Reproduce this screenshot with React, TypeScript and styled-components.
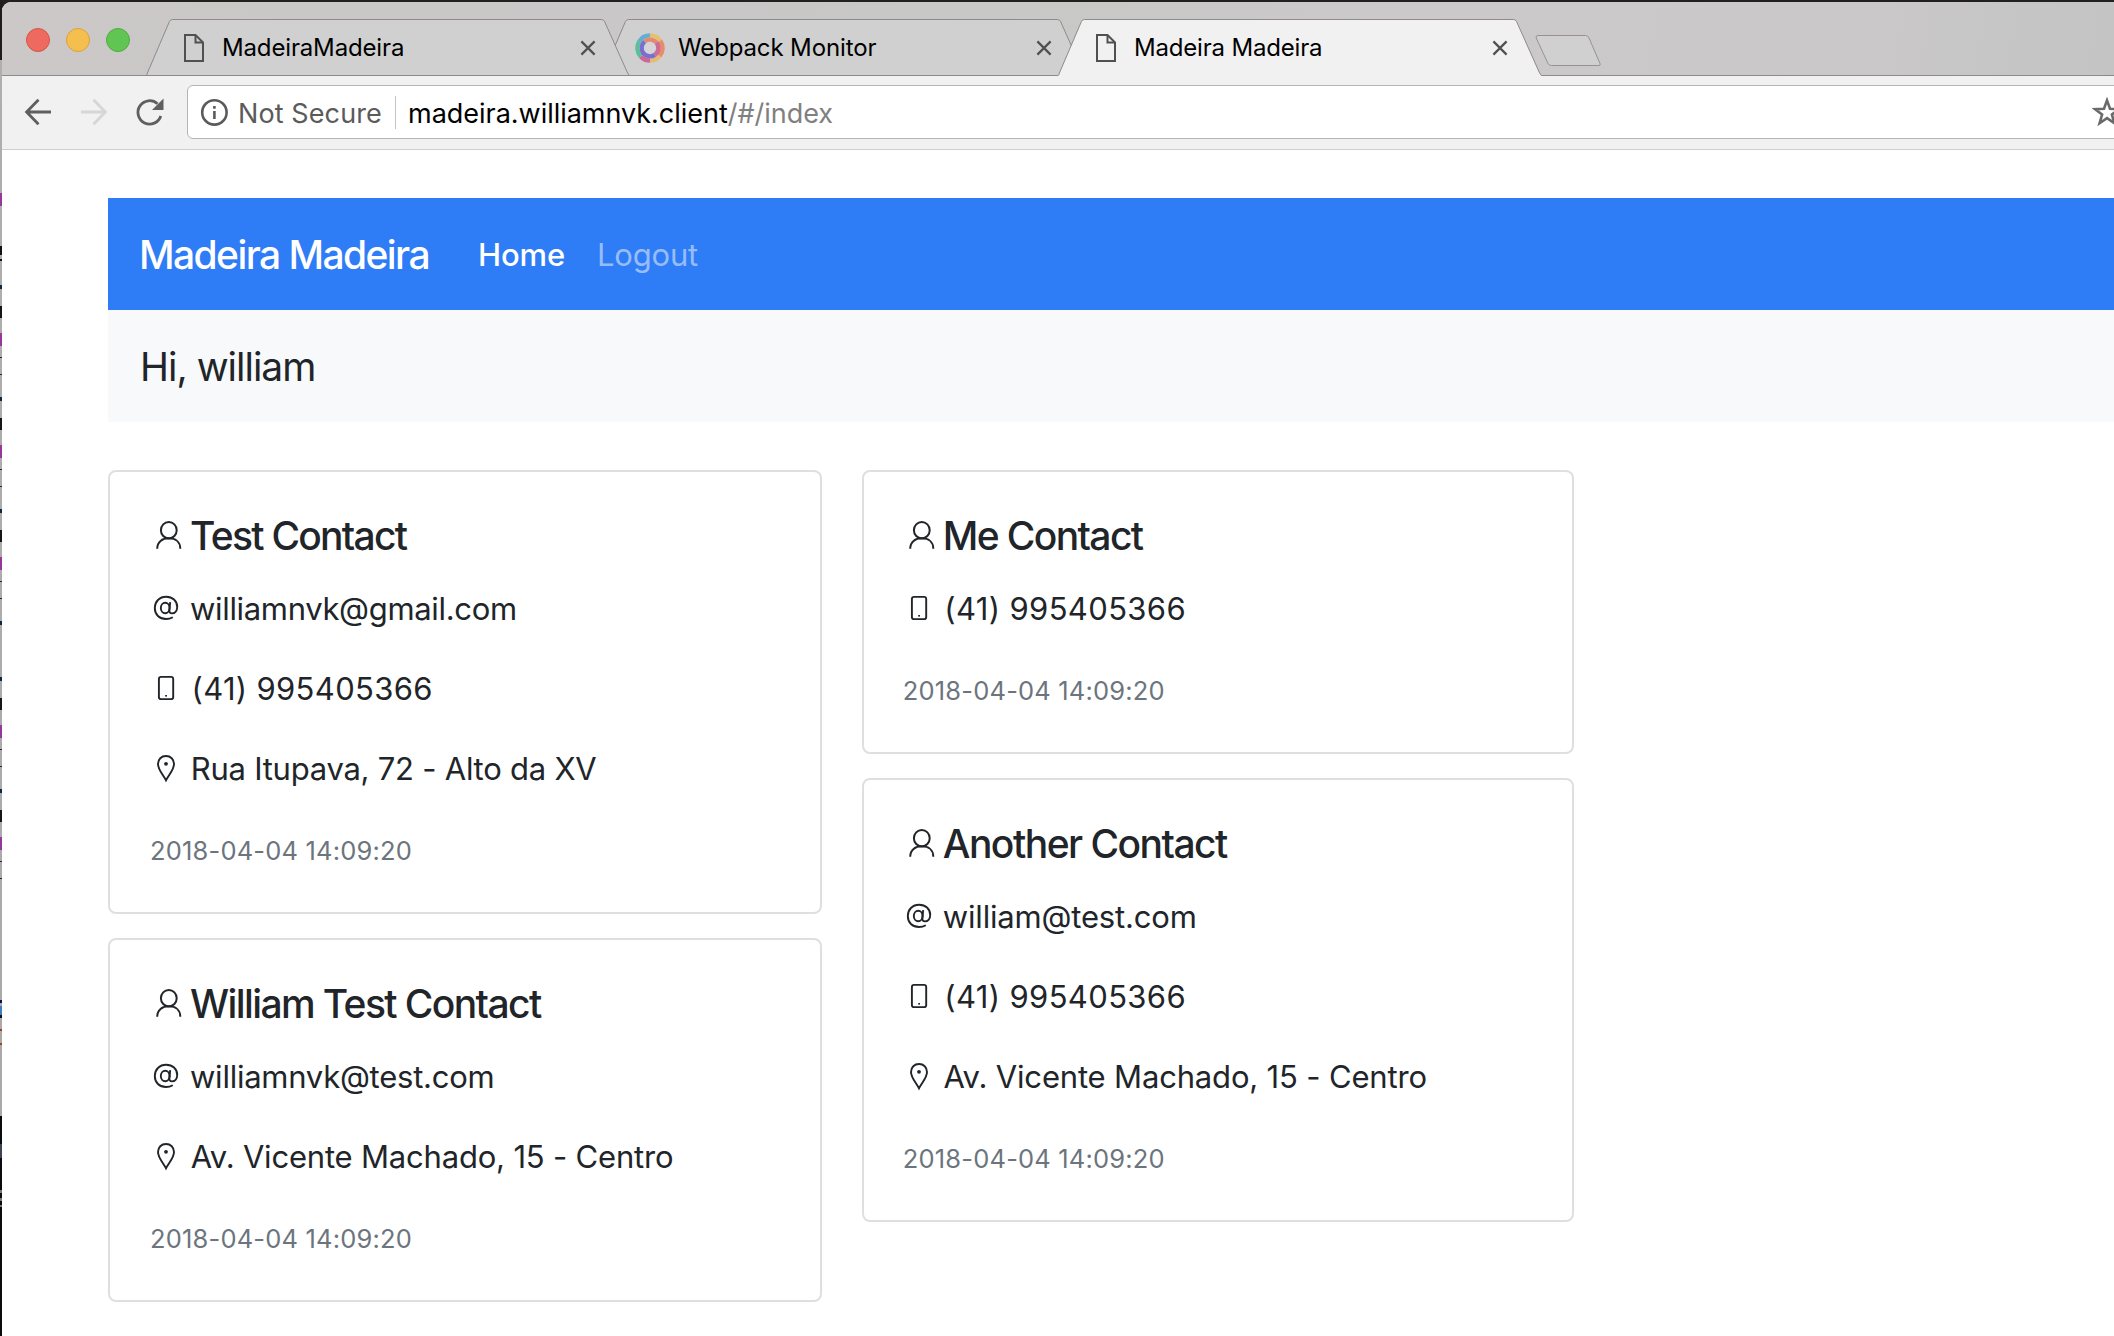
import React from 'react';
import styled, { createGlobalStyle } from 'styled-components';

const GlobalStyle = createGlobalStyle`
  *, *::before, *::after { box-sizing: border-box; }
  html, body { margin: 0; padding: 0; background: #fff; overflow: hidden; }
  body { font-family: Inter, "Liberation Sans", sans-serif; color: #212529; }
  svg { display: block; flex: none; }
  h5, p { margin: 0; }
`;

const Screen = styled.div`
  width: 2114px;
  height: 1336px;
  display: flex;
  flex-direction: column;
  background: #fff;
  overflow: hidden;
`;

const DesktopTop = styled.div`
  height: 2px;
  flex: none;
  background: #231f20;
`;

const Row = styled.div`
  display: flex;
  flex: 1;
  min-height: 0;
  background: linear-gradient(#231f20 20px, #fff 20px);
`;

const DesktopEdge = styled.div`
  position: relative;
  width: 2px;
  flex: none;
  background: linear-gradient(#1d1b1c 58px, #b0afb0 58px, #a9a9a9 1114px, #0b0b0d 1114px);
`;

const Mark = styled.i<{ $y: number; $h: number; $c: string }>`
  position: absolute;
  left: 0;
  width: 2px;
  top: ${(p) => p.$y - 2}px;
  height: ${(p) => p.$h}px;
  background: ${(p) => p.$c};
`;

const Browser = styled.div`
  flex: 1;
  min-width: 0;
  display: flex;
  flex-direction: column;
  background: #fff;
  border-top-left-radius: 9px;
  overflow: hidden;
`;

const TabStrip = styled.div`
  height: 74px;
  flex: none;
  display: flex;
  padding-left: 24px;
  border-bottom: 1px solid #8d898c;
  background: linear-gradient(100deg, #cbc8c7 0%, #c9c7c7 30%, #c8c8c7 45%, #cbc9c9 65%, #cac8c8 88%, #c4c4c4 100%);
`;

const Lights = styled.div`
  display: flex;
  gap: 16px;
  width: 120px;
  padding-top: 26px;
`;

const Light = styled.span<{ $fill: string; $edge: string }>`
  width: 24px;
  height: 24px;
  border-radius: 50%;
  background: ${(p) => p.$fill};
  border: 1px solid ${(p) => p.$edge};
`;

const Tab = styled.div<{ $z: number }>`
  position: relative;
  z-index: ${(p) => p.$z};
  width: 484px;
  height: 57px;
  margin: 17px -28px 0 0;
  flex: none;
  display: flex;
  align-items: center;
  padding: 0 34px 0 37px;
`;

const TabShape = styled.svg`
  position: absolute;
  left: 0;
  top: 0;
`;

const TabIcon = styled.span<{ $wide?: boolean }>`
  position: relative;
  width: ${(p) => (p.$wide ? 44 : 39)}px;
  margin-left: ${(p) => (p.$wide ? -5 : 0)}px;
  display: flex;
`;

const TabTitle = styled.span<{ $ls: number }>`
  position: relative;
  flex: 1;
  font-size: 24px;
  line-height: 30px;
  letter-spacing: ${(p) => p.$ls}px;
  color: #000;
  white-space: nowrap;
`;

const TabClose = styled.svg`
  position: relative;
`;

const NewTab = styled.svg`
  margin: 32px 0 0 21px;
`;

const Toolbar = styled.div`
  height: 74px;
  flex: none;
  display: flex;
  align-items: flex-start;
  padding: 9px 0 0 22px;
  background: #f1f1f1;
  border-bottom: 1px solid #cfcfcf;
`;

const NavIcon = styled.svg<{ $gap?: number }>`
  margin: 11px ${(p) => p.$gap ?? 24}px 0 0;
`;

const Address = styled.div`
  height: 54px;
  flex: 1;
  display: flex;
  align-items: center;
  padding-left: 12px;
  margin-right: -20px;
  border: 1px solid #b4b4b4;
  border-radius: 6px;
  background: #fff;
  font-size: 27px;
  line-height: 34px;
  white-space: nowrap;
`;

const Secure = styled.span`
  margin-left: 10px;
  padding-top: 3px;
  width: 157px;
  color: #5b5b5b;
  letter-spacing: 0.1px;
`;

const Divider = styled.span`
  width: 1px;
  height: 33px;
  background: #c4c4c4;
  margin-right: 12px;
`;

const Url = styled.span`
  flex: 1;
  padding-top: 3px;
  color: #000;
  letter-spacing: -0.02px;
`;

const UrlPath = styled.span`
  color: #808080;
`;

const Star = styled.svg`
  margin-right: 11px;
`;

const Page = styled.main`
  flex: 1;
  padding: 48px 0 0 106px;
`;

const Navbar = styled.nav`
  height: 112px;
  display: flex;
  align-items: center;
  padding-left: 31px;
  background: #2e7cf6;
  color: #fff;
`;

const Brand = styled.span`
  width: 339px;
  font-size: 39px;
  font-weight: 450;
  letter-spacing: -1.58px;
`;

const NavLink = styled.span<{ $active?: boolean; $w: number; $ls: number }>`
  width: ${(p) => p.$w}px;
  font-size: 31px;
  font-weight: ${(p) => (p.$active ? 450 : 400)};
  letter-spacing: ${(p) => p.$ls}px;
  color: ${(p) => (p.$active ? '#fff' : '#96bdfa')};
`;

const Greeting = styled.div`
  height: 112px;
  display: flex;
  align-items: center;
  padding-left: 32px;
  background: #f8f9fb;
  font-size: 39px;
  letter-spacing: -1px;
`;

const Columns = styled.div`
  display: flex;
  align-items: flex-start;
  gap: 39.5px;
  margin-top: 48px;
`;

const Column = styled.div<{ $w: number }>`
  width: ${(p) => p.$w}px;
  display: flex;
  flex-direction: column;
  gap: 24px;
`;

const Card = styled.article<{ $inset: number }>`
  border: 2px solid #dfdfdf;
  border-radius: 8px;
  padding: 40px ${(p) => p.$inset}px;
  display: flex;
  flex-direction: column;
`;

const CardTitle = styled.h5<{ $ls: number }>`
  display: flex;
  align-items: center;
  height: 48px;
  margin-bottom: 24px;
  font-size: 39px;
  font-weight: 550;
  line-height: 48px;
  letter-spacing: ${(p) => p.$ls}px;
  white-space: nowrap;
`;

const CardLine = styled.p`
  display: flex;
  align-items: center;
  height: 48px;
  margin-bottom: 32px;
  font-size: 31px;
  line-height: 48px;
  white-space: nowrap;
`;

const LineText = styled.span<{ $ls: number; $indent: number }>`
  padding: 2px 0 0 ${(p) => p.$indent}px;
  letter-spacing: ${(p) => p.$ls}px;
`;

const CardDate = styled.p`
  height: 48px;
  padding-top: 1px;
  font-size: 31px;
  line-height: 48px;
`;

const Small = styled.small`
  font-size: 25.5px;
  color: #6c757d;
  letter-spacing: 0.18px;
`;

const Glyph = styled.span`
  width: 40px;
  flex: none;
`;

const ink = { fill: 'none', stroke: '#212529' };

const UserIcon = () => (
  <svg width="40" height="40" viewBox="0 0 40 40" {...ink} strokeWidth="2">
    <ellipse cx="18.8" cy="14.2" rx="7.9" ry="8.2" />
    <path d="M7.2 32.700C7.200 25.800 12.300 22.300 18.800 22.300S30.300 25.800 30.300 32.700" />
  </svg>
);

const AtIcon = () => (
  <svg width="40" height="40" viewBox="0 0 40 40" {...ink} strokeWidth="1.9">
    <ellipse cx="15.200" cy="20" rx="4.400" ry="5.200" />
    <path d="M20.200 14.200L19.400 22.200C19.200 24.400 20.200 25.400 22 25.400C25 25.400 27.200 22.600 27.200 19C27.200 12.800 22.400 8.800 16.200 8.800C9.400 8.800 4.800 13.600 4.800 20C4.800 26.600 9.400 31 16 31C18.600 31 20.800 30.400 22.800 29.200" />
  </svg>
);

const PhoneIcon = () => (
  <svg width="40" height="40" viewBox="0 0 40 40" {...ink} strokeWidth="1.900">
    <rect x="8.900" y="8.900" width="14.300" height="22.200" rx="2.200" />
    <rect x="15.200" y="27" width="1.800" height="1.600" fill="#212529" stroke="none" />
  </svg>
);

const PinIcon = () => (
  <svg width="40" height="40" viewBox="0 0 40 40" {...ink} strokeWidth="1.900">
    <path d="M16 32.400C13.400 27.200 8 21.800 8 16C8 11.200 11.400 8 16 8S24 11.200 24 16C24 21.800 18.600 27.200 16 32.400Z" />
    <circle cx="16" cy="15.800" r="1.900" fill="#212529" stroke="none" />
  </svg>
);

const icons = { at: AtIcon, phone: PhoneIcon, pin: PinIcon };

type Line = { icon: keyof typeof icons; text: string; ls: number };
type Contact = { name: string; ls: number; lines: Line[] };

const left: Contact[] = [
  {
    name: 'Test Contact',
    ls: -1.72,
    lines: [
      { icon: 'at', text: 'williamnvk@gmail.com', ls: -0.33 },
      { icon: 'phone', text: '(41) 995405366', ls: 0.33 },
      { icon: 'pin', text: 'Rua Itupava, 72 - Alto da XV', ls: -0.24 },
    ],
  },
  {
    name: 'William Test Contact',
    ls: -1.6,
    lines: [
      { icon: 'at', text: 'williamnvk@test.com', ls: -0.25 },
      { icon: 'pin', text: 'Av. Vicente Machado, 15 - Centro', ls: -0.19 },
    ],
  },
];

const right: Contact[] = [
  { name: 'Me Contact', ls: -1.63, lines: [{ icon: 'phone', text: '(41) 995405366', ls: 0.36 }] },
  {
    name: 'Another Contact',
    ls: -1.52,
    lines: [
      { icon: 'at', text: 'william@test.com', ls: -0.18 },
      { icon: 'phone', text: '(41) 995405366', ls: 0.36 },
      { icon: 'pin', text: 'Av. Vicente Machado, 15 - Centro', ls: -0.17 },
    ],
  },
];

const indents = { at: 0, phone: 1.5, pin: 0.7 };

const ContactCard = ({ contact, inset }: { contact: Contact; inset: number }) => (
  <Card $inset={inset}>
    <CardTitle $ls={contact.ls}>
      <Glyph><UserIcon /></Glyph>
      {contact.name}
    </CardTitle>
    {contact.lines.map((line) => {
      const Icon = icons[line.icon];
      return (
        <CardLine key={line.text}>
          <Glyph><Icon /></Glyph>
          <LineText $ls={line.ls} $indent={indents[line.icon]}>{line.text}</LineText>
        </CardLine>
      );
    })}
    <CardDate><Small>2018-04-04 14:09:20</Small></CardDate>
  </Card>
);

const DocIcon = () => (
  <svg width="22" height="30" viewBox="0 0 22 30" fill="none" stroke="#505050" strokeWidth="2">
    <path d="M2 2H12.500L20 9.500V28H2Z" />
    <path d="M12.500 2V9.500H20" />
  </svg>
);

const arcs: [string, number, number][] = [
  ['#e6c06c', 0, 55], ['#e98b6c', 55, 130], ['#e4bd70', 130, 180],
  ['#cc6796', 180, 228], ['#58c09a', 228, 300], ['#62afd0', 300, 360],
];
const innerArcs: [string, number, number][] = [
  ['#e58a72', 320, 410], ['#cc6d96', 50, 145], ['#7a70cc', 145, 320],
];
const arc = (r: number, a: number, b: number) => {
  const pt = (d: number) => {
    const t = ((d - 90) * Math.PI) / 180;
    return `${(16 + r * Math.cos(t)).toFixed(2)} ${(16 + r * Math.sin(t)).toFixed(2)}`;
  };
  return `M${pt(a)}A${r} ${r} 0 0 1 ${pt(b)}`;
};

const MonitorIcon = () => (
  <svg width="32" height="32" viewBox="0 0 32 32" fill="none" strokeWidth="4.400">
    <circle cx="16" cy="16" r="8" fill="#d6d4da" />
    {arcs.map(([c, a, b]) => <path key={a} d={arc(12.6, a, b)} stroke={c} />)}
    {innerArcs.map(([c, a, b]) => <path key={a} d={arc(8.4, a, b)} stroke={c} />)}
  </svg>
);

type TabProps = { title: string; ls: number; z: number; active?: boolean; wide?: boolean; icon: React.ReactNode };

const BrowserTab = ({ title, ls, z, active, wide, icon }: TabProps) => (
  <Tab $z={z}>
    <TabShape width="484" height="57" viewBox="0 0 484 57">
      <path
        d="M0 57L1.4 54L23.4 2.6Q24.4 .5 26.6 .5H455.4Q457.6 .5 458.6 2.6L481.6 54L483.4 57Z"
        fill={active ? '#f1f1f1' : '#d0d0d0'}
      />
      <path
        d="M.6 56.4L1.4 54L23.4 2.6Q24.4 .5 26.6 .5H455.4Q457.6 .5 458.6 2.6L481.6 54L483.4 56.4"
        fill="none"
        stroke="#8d898c"
      />
      {!active && <path d="M0 56.5H484" stroke="#8d898c" />}
    </TabShape>
    <TabIcon $wide={wide}>{icon}</TabIcon>
    <TabTitle $ls={ls}>{title}</TabTitle>
    <TabClose width="16" height="16" viewBox="0 0 16 16" stroke="#505050" strokeWidth="2.200">
      <path d="M1.400 1.400L14.600 14.600M14.600 1.400L1.400 14.600" />
    </TabClose>
  </Tab>
);

const marks: [number, number, string][] = [
  [193, 13, '#94389a'], [246, 9, '#111'], [259, 2, '#111'], [285, 4, '#10263c'], [306, 12, '#151515'],
  [333, 13, '#94389a'], [357, 1, '#26224a'], [374, 1, '#26224a'], [397, 4, '#10263c'], [418, 12, '#151515'],
  [445, 13, '#94389a'], [469, 1, '#26224a'], [486, 1, '#26224a'], [509, 4, '#10263c'], [530, 12, '#151515'],
  [557, 13, '#94389a'], [581, 1, '#26224a'], [598, 1, '#26224a'], [621, 4, '#10263c'], [677, 4, '#10263c'],
  [698, 12, '#151515'], [725, 13, '#94389a'], [749, 1, '#26224a'], [766, 1, '#26224a'], [789, 4, '#10263c'],
  [810, 12, '#151515'], [837, 13, '#94389a'], [861, 1, '#26224a'], [878, 1, '#26224a'], [1000, 3, '#101040'],
  [1006, 9, '#3d7dc0'], [1015, 3, '#111'], [1029, 2, '#a63c1e'], [1043, 2, '#a63c1e'],
  [1144, 14, '#3c4450'], [1190, 3, '#777'], [1198, 3, '#777'], [1205, 2, '#777'],
];

export default function App() {
  return (
    <Screen>
      <GlobalStyle />
      <DesktopTop />
      <Row>
        <DesktopEdge>
          {marks.map(([y, h, c]) => <Mark key={y} $y={y} $h={h} $c={c} />)}
        </DesktopEdge>
        <Browser>
          <TabStrip>
            <Lights>
              <Light $fill="#ee6a5f" $edge="#d9534a" />
              <Light $fill="#f5bf50" $edge="#dca13a" />
              <Light $fill="#61c554" $edge="#4cad3f" />
            </Lights>
            <BrowserTab title="MadeiraMadeira" ls={-0.15} z={2} icon={<DocIcon />} />
            <BrowserTab title="Webpack Monitor" ls={-0.13} z={1} wide icon={<MonitorIcon />} />
            <BrowserTab title="Madeira Madeira" ls={-0.18} z={3} active icon={<DocIcon />} />
            <NewTab width="66" height="34" viewBox="0 0 66 34">
              <path d="M3 1.500H50.500Q53 1.500 54 4L65 29.500Q65.800 31.500 64 31.500H16.500Q14 31.500 13 29.500L1.200 4Q.500 1.500 3 1.500Z" fill="#d0d0d0" stroke="#969295" />
            </NewTab>
          </TabStrip>
          <Toolbar>
            <NavIcon width="28" height="32" viewBox="0 0 28 32" fill="none" stroke="#5f5f5f" strokeWidth="2.800">
              <path d="M27 16H3M14.500 3.800L2.600 16L14.500 28.200" />
            </NavIcon>
            <NavIcon width="32" height="32" viewBox="0 0 32 32" fill="none" stroke="#d6d6d6" strokeWidth="2.800">
              <path d="M5 16H29M17.500 3.800L29.400 16L17.500 28.200" />
            </NavIcon>
            <NavIcon $gap={21} width="34" height="32" viewBox="0 0 34 32" fill="none" stroke="#5f5f5f" strokeWidth="2.800">
              <path d="M28.800 20A11.700 11.700 0 1 1 25.500 7.700" />
              <path d="M31.500 2.500V14H20Z" fill="#5f5f5f" stroke="none" />
            </NavIcon>
            <Address>
              <svg width="28" height="28" viewBox="0 0 28 28" fill="none" stroke="#5b5b5b" strokeWidth="2.600">
                <circle cx="14.4" cy="14.400" r="12.200" />
                <path d="M14.400 12.900V20.900M14.400 7.900V10.700" />
              </svg>
              <Secure>Not Secure</Secure>
              <Divider />
              <Url>madeira.williamnvk.client<UrlPath>/#/index</UrlPath></Url>
              <Star width="30" height="30" viewBox="0 0 30 30" fill="none" stroke="#6a6a6a" strokeWidth="2.600">
                <path d="M15 3.400L18 11.800L26.900 12.200L19.900 17.500L22.400 26.200L15 21.100L7.600 26.200L10.100 17.500L3.100 12.200L12 11.800Z" />
              </Star>
            </Address>
          </Toolbar>
          <Page>
            <Navbar>
              <Brand>Madeira Madeira</Brand>
              <NavLink $active $w={119} $ls={-0.15}>Home</NavLink>
              <NavLink $w={110} $ls={-0.2}>Logout</NavLink>
            </Navbar>
            <Greeting>Hi, william</Greeting>
            <Columns>
              <Column $w={714}>{left.map((c) => <ContactCard key={c.name} contact={c} inset={40} />)}</Column>
              <Column $w={712.5}>{right.map((c) => <ContactCard key={c.name} contact={c} inset={39.3} />)}</Column>
            </Columns>
          </Page>
        </Browser>
      </Row>
    </Screen>
  );
}
